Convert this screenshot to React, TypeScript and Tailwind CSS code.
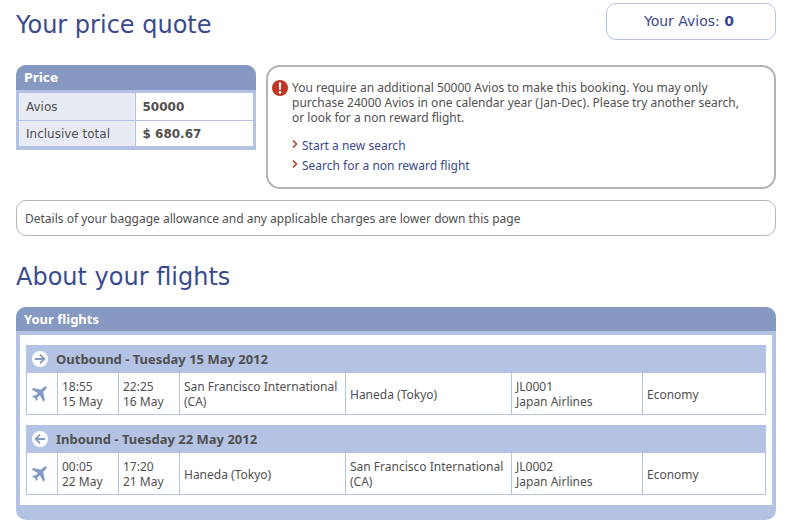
import React from "react";

type Flight = {
  title: string;
  direction: "out" | "in";
  departs: [string, string];
  arrives: [string, string];
  from: string;
  to: string;
  code: string;
  airline: string;
  cabin: string;
};

const flights: Flight[] = [
  {
    title: "Outbound - Tuesday 15 May 2012",
    direction: "out",
    departs: ["18:55", "15 May"],
    arrives: ["22:25", "16 May"],
    from: "San Francisco International (CA)",
    to: "Haneda (Tokyo)",
    code: "JL0001",
    airline: "Japan Airlines",
    cabin: "Economy",
  },
  {
    title: "Inbound - Tuesday 22 May 2012",
    direction: "in",
    departs: ["00:05", "22 May"],
    arrives: ["17:20", "21 May"],
    from: "Haneda (Tokyo)",
    to: "San Francisco International (CA)",
    code: "JL0002",
    airline: "Japan Airlines",
    cabin: "Economy",
  },
];

function DirectionIcon({ direction }: { direction: "out" | "in" }) {
  return (
    <svg viewBox="0 0 16 16" className="h-4 w-4 shrink-0" aria-hidden="true">
      <circle cx="8" cy="8" r="8" fill="#fff" />
      <path
        d={direction === "out" ? "M3 8H12M8 3.6L12.4 8L8 12.4" : "M13 8H4M8 3.6L3.6 8L8 12.4"}
        fill="none"
        stroke="#8699c3"
        strokeWidth="1.8"
      />
    </svg>
  );
}

function PlaneIcon() {
  return (
    <svg viewBox="0 0 16 16" className="block h-4 w-4" aria-hidden="true">
      <path
        d="M15.6 .8C14.2 .6 13 .9 12.2 1.7L10.2 3.7L2 2.3L.8 3.5L7 7L4.5 9.8L2.3 9.5L1.3 10.6L4 12L5.4 14.8L6.5 13.8L6.3 11.4L8.8 8.9L12.4 15.4L13.8 14.1L12.1 5.9L14.4 3.6C15.2 2.8 15.7 1.8 15.6 .8Z"
        fill="#8699c3"
        stroke="#8699c3"
        strokeWidth=".3"
      />
    </svg>
  );
}

function AlertIcon() {
  return (
    <svg viewBox="0 0 16 16" className="h-4 w-4 shrink-0" aria-hidden="true">
      <circle cx="8" cy="8" r="8" fill="#c03425" />
      <path d="M6.8 2.5H9.2L8.8 10H7.2Z" fill="#fff" />
      <circle cx="8" cy="12.4" r="1.3" fill="#fff" />
    </svg>
  );
}

function ArrowLink({ children }: { children: React.ReactNode }) {
  return (
    <li className="flex items-center gap-1">
      <svg viewBox="0 0 6 8" className="mb-1 h-2 w-1.5" aria-hidden="true">
        <path d="M1 .5L4.5 4L1 7.5" fill="none" stroke="#c03425" strokeWidth="1.5" />
      </svg>
      <a href="#" className="text-[#3a4a8e]">{children}</a>
    </li>
  );
}

function FlightTable({ flight }: { flight: Flight }) {
  const cell = "border border-[#b4c3e3] px-1 pt-1.5 pb-[5px]";
  return (
    <table className="w-full table-fixed border-collapse text-left">
      <colgroup>
        <col className="w-[31px]" />
        <col className="w-[61px]" />
        <col className="w-[61px]" />
        <col className="w-[166px]" />
        <col className="w-[166px]" />
        <col className="w-[131px]" />
        <col />
      </colgroup>
      <thead>
        <tr className="h-[27px] bg-[#b4c3e3]">
          <th colSpan={7} className="border border-[#b4c3e3] p-0 pl-[5px] text-[13px]">
            <span className="flex items-center gap-2">
              <DirectionIcon direction={flight.direction} />
              {flight.title}
            </span>
          </th>
        </tr>
      </thead>
      <tbody>
        <tr>
          <td className={cell}><PlaneIcon /></td>
          <td className={cell}>{flight.departs[0]}<br />{flight.departs[1]}</td>
          <td className={cell}>{flight.arrives[0]}<br />{flight.arrives[1]}</td>
          <td className={cell}>{flight.from}</td>
          <td className={cell}>{flight.to}</td>
          <td className={cell}>{flight.code}<br />{flight.airline}</td>
          <td className={cell}>{flight.cabin}</td>
        </tr>
      </tbody>
    </table>
  );
}

export default function App() {
  return (
    <main className="bg-white pt-[3px] pr-[25px] pb-2 pl-4 font-['Noto_Sans',sans-serif] text-[12px] leading-[15px] text-[#505050]">
      <header className="flex items-start justify-between font-['DejaVu_Sans',sans-serif] text-[#3a4a8e]">
        <h1 className="pt-2 text-2xl leading-7">Your price quote</h1>
        <p className="flex h-[37px] w-[170px] items-center justify-center rounded-[10px] border border-[#b4c3e3] pr-1 text-[14px] whitespace-pre">
          Your Avios: <b>0</b>
        </p>
      </header>

      <div className="mt-[25px] flex items-start gap-2.5">
        <section className="w-60 shrink-0 overflow-hidden rounded-t-[10px] bg-[#b4c3e3] font-['DejaVu_Sans',sans-serif]">
          <h2 className="bg-[#8699c3] px-2 pt-1.5 pb-1 font-bold text-white">Price</h2>
          <div className="px-[3px] pt-[3px] pb-1">
            <table className="w-full border-collapse text-left">
              <tbody>
                <tr className="h-[27px] border-b border-[#b4c3e3]">
                  <th className="w-[116px] border-r border-[#b4c3e3] bg-[#e8ebf4] px-[7px] pt-0.5 pb-0 font-normal">Avios</th>
                  <td className="bg-white px-[7px] pt-0.5 pb-0 font-bold">50000</td>
                </tr>
                <tr className="h-[26px]">
                  <th className="border-r border-[#b4c3e3] bg-[#e8ebf4] px-[7px] pt-0.5 pb-0 font-normal">Inclusive total</th>
                  <td className="bg-white px-[7px] pt-0.5 pb-0 font-bold">$ 680.67</td>
                </tr>
              </tbody>
            </table>
          </div>
        </section>

        <section role="alert" className="flex min-w-0 flex-1 gap-1 rounded-[14px] border-2 border-[#b4b4b4] pt-[13px] pr-5 pb-3.5 pl-1">
          <AlertIcon />
          <div>
            <p>
              You require an additional 50000 Avios to make this booking. You may only purchase 24000 Avios in one
              calendar year (Jan-Dec). Please try another search, or look for a non reward flight.
            </p>
            <ul className="mt-[13px] flex flex-col gap-[5px]">
              <ArrowLink>Start a new search</ArrowLink>
              <ArrowLink>Search for a non reward flight</ArrowLink>
            </ul>
          </div>
        </section>
      </div>

      <p className="mt-[11px] flex h-9 items-center rounded-[10px] border border-[#b4b4b4] px-2">
        Details of your baggage allowance and any applicable charges are lower down this page
      </p>

      <h1 className="mt-[25px] font-['DejaVu_Sans',sans-serif] text-2xl text-[#3a4a8e]">About your flights</h1>

      <section className="mt-3.5 overflow-hidden rounded-[10px] bg-[#b4c3e3]">
        <h2 className="bg-[#8699c3] px-2 pt-[5px] pb-1 text-[13px] leading-[15px] font-bold text-white">Your flights</h2>
        <div className="px-1 pt-1 pb-[15px]">
          <div className="flex flex-col gap-2.5 bg-white px-1.5 py-2.5">
            {flights.map((flight) => (
              <FlightTable key={flight.code} flight={flight} />
            ))}
          </div>
        </div>
      </section>
    </main>
  );
}
